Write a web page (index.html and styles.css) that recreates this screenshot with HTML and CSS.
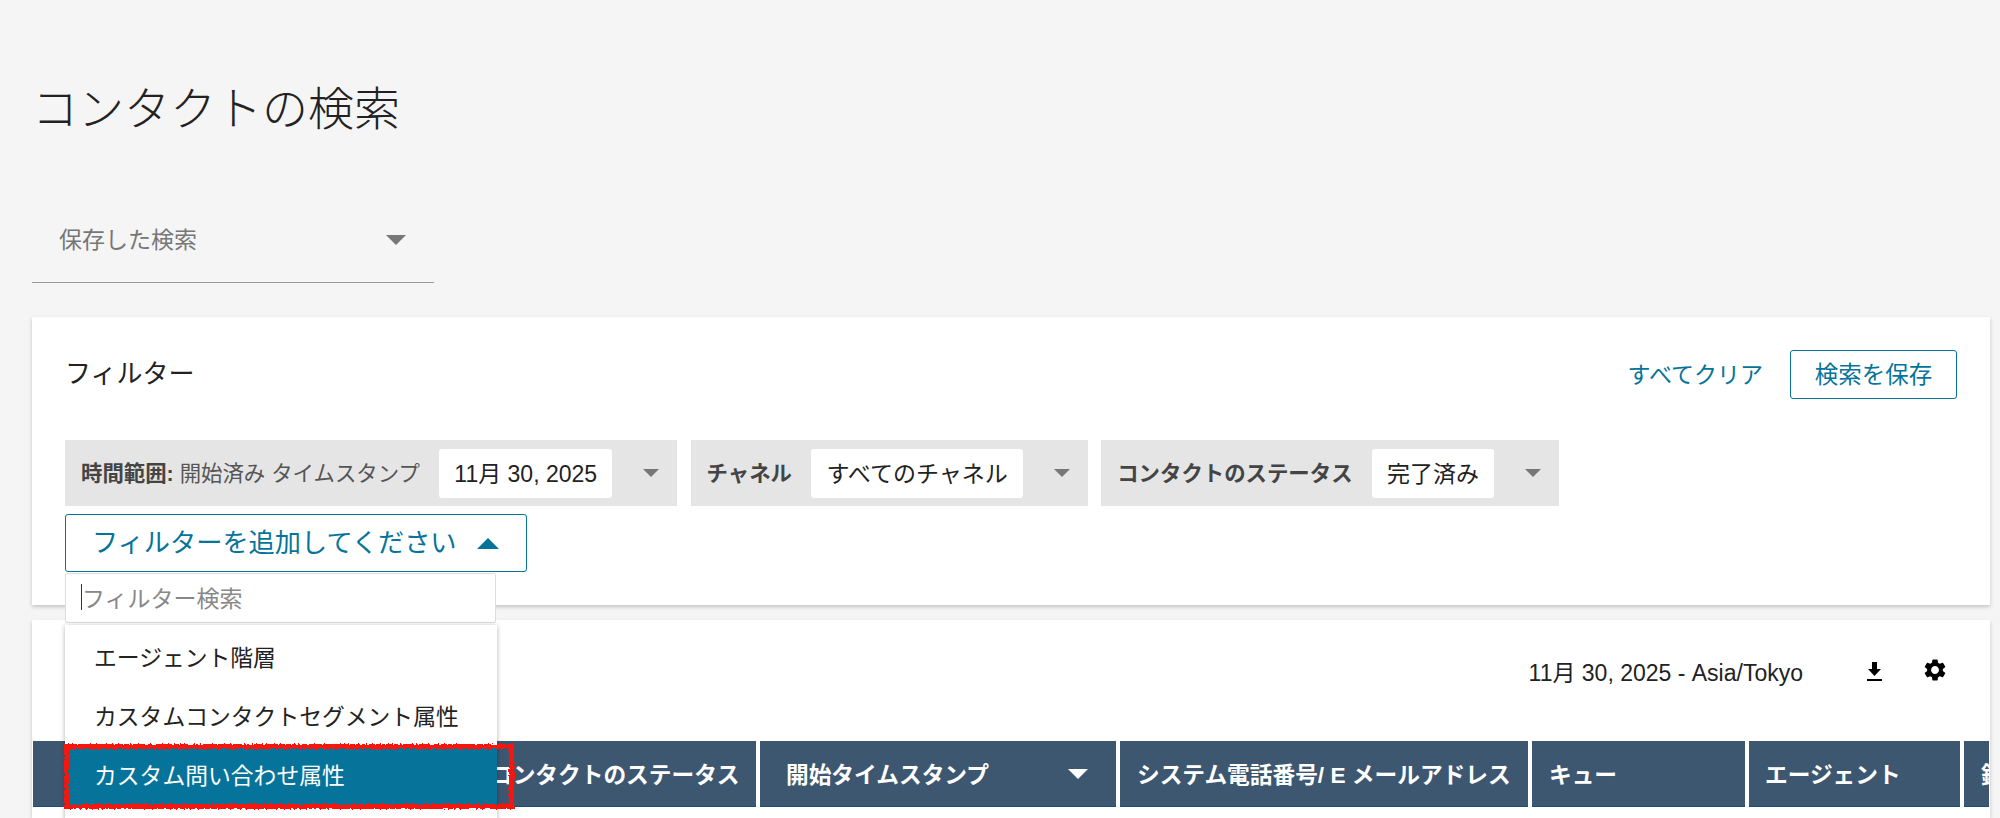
FILE: index.html
```html
<!DOCTYPE html>
<html lang="ja">
<head>
    <meta charset="UTF-8">
    <meta name="viewport" content="width=device-width, initial-scale=1.0">
    <title>コンタクトの検索</title>
    <link rel="stylesheet" href="styles.css">
</head>
<body>

<div class="page">
    <h1 class="page-title">コンタクトの検索</h1>

    <div class="saved-search">
        <span>保存した検索</span>
        <span class="arrow"></span>
    </div>

    <section class="card filters">
        <div class="filters-head">
            <span class="filters-title">フィルター</span>
            <div class="filters-actions">
                <a class="link" href="#">すべてクリア</a>
                <button class="btn-outline">検索を保存</button>
            </div>
        </div>

        <div class="pills">
            <div class="pill">
                <span class="pill-label"><b>時間範囲:</b> 開始済み タイムスタンプ</span>
                <span class="pill-value">11月 30, 2025</span>
                <span class="arrow arrow-small"></span>
            </div>
            <div class="pill">
                <span class="pill-label"><b>チャネル</b></span>
                <span class="pill-value">すべてのチャネル</span>
                <span class="arrow arrow-small"></span>
            </div>
            <div class="pill">
                <span class="pill-label"><b>コンタクトのステータス</b></span>
                <span class="pill-value">完了済み</span>
                <span class="arrow arrow-small"></span>
            </div>
        </div>

        <div class="add-filter">
            <button class="btn-add">
                フィルターを追加してください
                <span class="arrow-up"></span>
            </button>

            <div class="dropdown">
                <div class="dropdown-search"><span class="caret"></span>フィルター検索</div>
                <ul class="dropdown-menu">
                    <li>エージェント階層</li>
                    <li>カスタムコンタクトセグメント属性</li>
                    <li class="selected">カスタム問い合わせ属性</li>
                </ul>
                <svg class="callout" width="450" height="65" viewBox="0 0 450 65">
                    <filter id="rough" x="-5%" y="-20%" width="110%" height="140%">
                        <feTurbulence type="fractalNoise" baseFrequency="0.5" numOctaves="2" seed="3"/>
                        <feDisplacementMap in="SourceGraphic" scale="4"/>
                    </filter>
                    <rect x="2.5" y="2.5" width="445" height="60" fill="none" stroke="#f5140c" stroke-width="5" filter="url(#rough)"/>
                </svg>
            </div>
        </div>
    </section>

    <section class="card results">
        <div class="results-bar">
            <span class="results-date">11月 30, 2025 - Asia/Tokyo</span>
            <svg class="icon-download" width="15" height="19" viewBox="0 0 15 19">
                <path d="M5 0h5v7h4l-6.5 7L1 7h4zM0 17h15v2H0z"/>
            </svg>
            <svg class="icon-gear" width="22" height="22" viewBox="2 2 20 20">
                <path d="M19.14 12.94c.04-.3.06-.61.06-.94 0-.32-.02-.64-.07-.94l2.03-1.58c.18-.14.23-.41.12-.61l-1.92-3.32c-.12-.22-.37-.29-.59-.22l-2.39.96c-.5-.38-1.03-.7-1.62-.94l-.36-2.54c-.04-.24-.24-.41-.48-.41h-3.84c-.24 0-.43.17-.47.41l-.36 2.54c-.59.24-1.13.57-1.62.94l-2.39-.96c-.22-.08-.47 0-.59.22L2.74 8.87c-.12.21-.08.47.12.61l2.03 1.58c-.05.3-.09.63-.09.94s.02.64.07.94l-2.03 1.58c-.18.14-.23.41-.12.61l1.92 3.32c.12.22.37.29.59.22l2.39-.96c.5.38 1.03.7 1.62.94l.36 2.54c.05.24.24.41.48.41h3.84c.24 0 .44-.17.47-.41l.36-2.54c.59-.24 1.13-.56 1.62-.94l2.39.96c.22.08.47 0 .59-.22l1.92-3.32c.12-.22.07-.47-.12-.61l-2.01-1.58zM12 15.6c-1.98 0-3.6-1.62-3.6-3.6s1.62-3.6 3.6-3.6 3.6 1.62 3.6 3.6-1.62 3.6-3.6 3.6z"/>
            </svg>
        </div>

        <div class="table-head">
            <div class="th col-id"></div>
            <div class="th col-status">コンタクトのステータス</div>
            <div class="th col-start">開始タイムスタンプ<span class="arrow-down"></span></div>
            <div class="th col-system">システム電話番号/ E メールアドレス</div>
            <div class="th col-queue">キュー</div>
            <div class="th col-agent">エージェント</div>
            <div class="th col-rec">録音</div>
        </div>
    </section>
</div>

</body>
</html>
```

FILE: styles.css
```css
* {
    box-sizing: border-box;
}

html, body {
    margin: 0;
    height: 100%;
}

body {
    background: #f5f5f5;
    color: #222;
    font-family: "Liberation Sans", "Noto Sans CJK JP", sans-serif;
}

.page {
    display: flex;
    flex-direction: column;
    height: 100vh;
    padding: 85px 10px 0 32px;
    overflow: hidden;
}

.page-title {
    margin: 0 0 64px;
    font-size: 46px;
    font-weight: 300;
    line-height: 48px;
}

/* saved search select */
.saved-search {
    display: flex;
    justify-content: space-between;
    align-items: center;
    flex: none;
    width: 402px;
    height: 86px;
    margin-bottom: 34px;
    padding: 0 28px 0 27px;
    border-bottom: 1px solid #999;
    color: #777;
    font-size: 23px;
}

.saved-search span:first-child {
    padding-bottom: 3px;
}

.arrow {
    width: 0;
    height: 0;
    border-left: 10px solid transparent;
    border-right: 10px solid transparent;
    border-top: 10px solid #777;
}

.arrow-small {
    border-left-width: 8px;
    border-right-width: 8px;
    border-top-width: 8px;
}

/* cards */
.card {
    flex: none;
    background: #fff;
    box-shadow: 0 2px 4px rgba(0, 0, 0, 0.2);
}

.filters {
    height: 288px;
    padding: 33px;
}

.filters-head {
    display: flex;
    justify-content: space-between;
    align-items: center;
    height: 49px;
    margin-bottom: 41px;
}

.filters-title {
    padding-bottom: 6px;
    font-size: 26px;
}

.filters-actions {
    display: flex;
    align-items: center;
    gap: 27px;
}

.link {
    padding-bottom: 4px;
    color: #06749a;
    font-size: 23px;
    text-decoration: none;
}

.btn-outline {
    width: 167px;
    height: 49px;
    padding: 0 0 4px;
    border: 1px solid #06749a;
    border-radius: 3px;
    background: #fff;
    color: #06749a;
    font-family: inherit;
    font-size: 23.5px;
}

/* filter pills */
.pills {
    display: flex;
    gap: 13.5px;
    margin-bottom: 8px;
}

.pill {
    display: flex;
    align-items: center;
    height: 66px;
    padding: 0 18px 0 16px;
    background: #e5e5e5;
    color: #555;
    font-size: 21.4px;
}

.pill-label {
    padding-bottom: 4px;
}

.pill-label b {
    color: #444;
}

.pill-value {
    display: flex;
    align-items: center;
    height: 49px;
    margin: 0 31px 0 19.5px;
    padding: 0 15px 3px;
    border-radius: 3px;
    background: #fff;
    color: #222;
    font-size: 23px;
}

/* add filter */
.add-filter {
    position: relative;
    width: 462px;
}

.btn-add {
    display: flex;
    justify-content: space-between;
    align-items: center;
    width: 462px;
    height: 58px;
    padding: 0 27px 4px 26px;
    border: 1px solid #06749a;
    border-radius: 3px;
    background: #fff;
    color: #06749a;
    font-family: inherit;
    font-size: 26.2px;
}

.arrow-up {
    width: 0;
    height: 0;
    margin-top: 4px;
    border-left: 11px solid transparent;
    border-right: 11px solid transparent;
    border-bottom: 11px solid #06749a;
}

.dropdown {
    position: absolute;
    top: 59px;
    left: 0;
    z-index: 10;
    width: 432px;
}

.dropdown-search {
    display: flex;
    align-items: center;
    width: 431px;
    height: 50px;
    padding: 0 0 3px 15px;
    border: 1px solid #ddd;
    border-radius: 2px;
    background: #fff;
    color: #888;
    font-size: 23px;
}

.caret {
    width: 1px;
    height: 26px;
    background: #333;
}

.dropdown-menu {
    margin: 2px 0 0;
    padding: 4px 0 40px;
    background: #fff;
    box-shadow: 0 1px 5px rgba(0, 0, 0, 0.3);
    font-size: 22.8px;
    list-style: none;
}

.dropdown-menu li {
    height: 59px;
    padding-left: 29px;
    line-height: 59px;
}

.dropdown-menu .selected {
    background: #06749a;
    color: #fff;
}

.callout {
    position: absolute;
    top: 171px;
    left: -1px;
    overflow: visible;
}

/* results */
.results {
    flex: 1;
    margin-top: 15px;
}

.results-bar {
    display: flex;
    justify-content: flex-end;
    align-items: center;
    height: 121px;
    padding: 0 44px 18px 0;
}

.results-date {
    margin-right: 64px;
    padding-bottom: 2px;
    font-size: 23px;
}

.icon-download {
    margin-right: 42px;
}

.icon-gear {
    margin-bottom: 3px;
}

.table-head {
    display: flex;
    gap: 4px;
    height: 66px;
    margin: 0 1px;
    overflow: hidden;
}

.th {
    display: flex;
    flex: none;
    align-items: center;
    padding-left: 17px;
    border-bottom: 1px solid #1d4f76;
    background: #3e5771;
    color: #fff;
    font-size: 22.7px;
    font-weight: 700;
    white-space: nowrap;
}

.col-id { width: 443px; }
.col-status { width: 276px; padding-left: 10px; }
.col-start { width: 356px; padding-left: 26px; }
.col-system { width: 408px; }
.col-queue { width: 213px; }
.col-agent { width: 211px; padding-left: 16px; }
.col-rec { width: 250px; }

.arrow-down {
    width: 0;
    height: 0;
    margin-left: 79px;
    border-left: 10px solid transparent;
    border-right: 10px solid transparent;
    border-top: 10px solid #fff;
}
```
